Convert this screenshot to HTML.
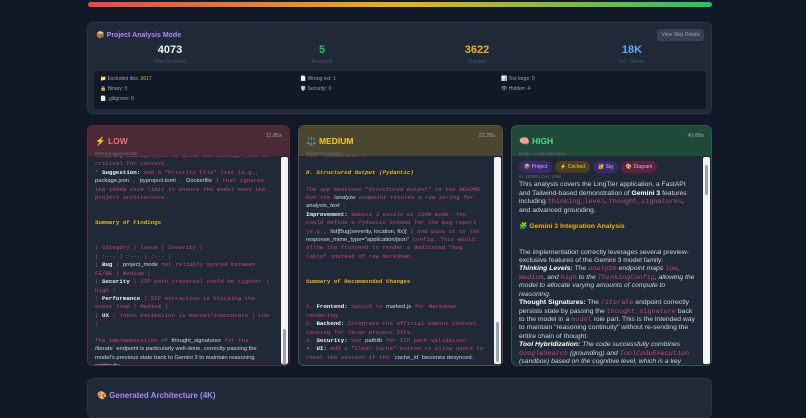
<!DOCTYPE html>
<html><head><meta charset="utf-8"><style>
*{box-sizing:border-box;margin:0;padding:0}
body{width:806px;height:407px;overflow:hidden;background:#111827;font-family:"Liberation Sans","Noto Sans CJK SC",sans-serif;color:#d1d5db;position:relative}
.bar{position:absolute;left:88px;top:2px;width:624px;height:5px;border-radius:3px;background:linear-gradient(90deg,#ef4444,#eab308 50%,#22c55e)}
.card{position:absolute;background:#1f2937;border:1px solid #2a3546;border-radius:6px}
.title{color:#a78bfa;font-weight:bold;font-size:7px}
.stat{position:absolute;text-align:center;width:120px;font-weight:bold;font-size:11px}
.stat small{display:block;font-size:5px;color:#4b5563;font-weight:normal;margin-top:3px}
.inner{position:absolute;left:6px;top:48px;width:612px;height:38px;background:#111827;border-radius:4px;font-size:5px;color:#9ca3af}
.inner span{position:absolute}
.col{position:absolute;top:125px;height:241px;border-radius:6px;background:#1f2937;overflow:hidden}
.hd{height:30px;padding:5px 7px;position:relative;z-index:2}
.hd b{font-size:8.5px}
.hd i{position:absolute;right:7px;top:7px;font-style:normal;font-size:5.5px;color:#9ca3af}
.hd em{display:block;font-style:normal;font-size:4.5px;color:#6b7280;margin-top:2px}
.body{position:absolute;top:30px;left:0;right:9px;bottom:0;padding:0 7px;font-family:"Liberation Mono",monospace;font-size:5.8px;line-height:8.4px;color:#d0407f;overflow:hidden;z-index:1}
.sb{position:absolute;right:1px;top:31px;width:7px;bottom:1px;background:#f3f4f6;border-radius:2px;z-index:3}
.sb div{position:absolute;left:2px;width:3px;background:#9ca3af;border-radius:2px}
.w{color:#f3f4f6;font-weight:bold}
.y{color:#eab308;font-weight:bold}
.s{font-family:"Liberation Sans",sans-serif;color:#d1d5db}
.p{font-family:"Liberation Sans",sans-serif;color:#d1d5db;font-size:6.8px;line-height:8.4px}
.p code{font-family:"Liberation Mono",monospace;color:#d0407f}
.tag{display:inline-block;font-family:"Liberation Sans",sans-serif;font-size:5px;padding:2px 5px;border-radius:6px;margin-right:3px}
</style></head><body>
<div class="bar"></div>
<div class="card" style="left:87px;top:22px;width:625px;height:92px">
 <div class="title" style="position:absolute;left:8px;top:8px">📦 Project Analysis Mode</div>
 <div style="position:absolute;right:7px;top:6px;background:#374151;color:#9ca3af;font-size:5px;padding:3px 4px;border-radius:3px">View Skip Details</div>
 <div class="stat" style="left:22px;top:21px;color:#f3f4f6">4073<small>Files Scanned</small></div>
 <div class="stat" style="left:174px;top:21px;color:#22c55e">5<small>Analyzed</small></div>
 <div class="stat" style="left:329px;top:21px;color:#eab308">3622<small>Skipped</small></div>
 <div class="stat" style="left:484px;top:21px;color:#60a5fa">18K<small>Est. Tokens</small></div>
 <div class="inner">
  <span style="left:6px;top:5px">📁 Excluded dirs: <b style="color:#eab308;font-weight:normal">3617</b></span>
  <span style="left:206px;top:5px">📄 Wrong ext: 1</span>
  <span style="left:407px;top:5px">📊 Too large: 0</span>
  <span style="left:6px;top:15px">🔒 Binary: 0</span>
  <span style="left:206px;top:15px">🛡️ Security: 0</span>
  <span style="left:407px;top:15px">👁 Hidden: 4</span>
  <span style="left:6px;top:25px">📄 .gitignore: 0</span>
 </div>
</div>

<div class="col" style="left:87px;width:203px;border:1px solid #5b2c3a">
 <div class="hd" style="background:#4a2b35"><b style="color:#f87171">⚡ LOW</b><i>11.85s</i><em>Fast but approximate</em></div>
 <div class="body" style="top:26px">
skipping package.json is good, but package.json is<br>critical for context.<br>* <span class="w">Suggestion:</span> Add a "Priority File" list (e.g.,<br><span class="s">package.json</span> , <span class="s">pyproject.toml</span> , <span class="s">Dockerfile</span> ) that ignores<br>the 100KB size limit to ensure the model sees the<br>project architecture.<br><br><br><span class="y">Summary of Findings</span><br><br><br>| Category | Issue | Severity |<br>| :--- | :--- | :--- |<br>| <span class="w">Bug</span> | <span class="s">project_mode</span> not reliably synced between<br>FE/BE | Medium |<br>| <span class="w">Security</span> | ZIP path traversal could be tighter |<br>High |<br>| <span class="w">Performance</span> | ZIP extraction is blocking the<br>event loop | Medium |<br>| <span class="w">UX</span> | Token estimation is manual/inaccurate | Low<br>|<br><br>The implementation of <span class="s">thought_signatures</span> for the<br><span class="s">/iterate` endpoint is particularly well-done, correctly passing the<br>model's previous state back to Gemini 3 to maintain reasoning<br>continuity.</span>
 </div>
 <div class="sb"><div style="top:172px;height:36px"></div></div>
</div>

<div class="col" style="left:298px;width:205px;border:1px solid #5a5330">
 <div class="hd" style="background:#4a4630"><b style="color:#facc15">⚖️ MEDIUM</b><i>22.28s</i><em>Balanced analysis</em></div>
 <div class="body" style="top:26px">
via `dataSelect`).<br><br><span class="y"><i>8. Structured Output (Pydantic)</i></span><br><br><i>The app mentions "Structured Output" in the README<br>but the <span class="s">/analyze</span> endpoint returns a raw string for<br><span class="s">analysis_text</span> .</i><br><span class="w">Improvement:</span> Gemini 3 excels at JSON mode. You<br>could define a Pydantic schema for the bug report<br>(e.g., <span class="s">list[Bug(severity, location, fix)]</span> ) and pass it to the<br><span class="s">response_mime_type="application/json"</span> config. This would<br>allow the frontend to render a dedicated "Bug<br>Table" instead of raw markdown.<br><br><br><span class="y">Summary of Recommended Changes</span><br><br><br>1. <span class="w">Frontend:</span> Switch to <span class="s">marked.js</span> for Markdown<br>rendering.<br>2. <span class="w">Backend:</span> Integrate the official Gemini Context<br>Caching for large project ZIPs.<br>3. <span class="w">Security:</span> Use <span class="s">pathlib</span> for ZIP path validation.<br>4. <span class="w">UI:</span> Add a "Clear Cache" button to allow users to<br>reset the session if the <span class="s">`cache_id` becomes desynced.</span>
 </div>
 <div class="sb"><div style="top:165px;height:40px"></div></div>
</div>

<div class="col" style="left:511px;width:201px;border:1px solid #2b5a47">
 <div class="hd" style="background:#1f4a3a"><b style="color:#4ade80">🧠 HIGH</b><i>40.88s</i><em>Deep + code execution</em></div>
 <div class="body" style="padding-top:5px">
  <span class="tag" style="background:#3b2a6b;color:#c4b5fd">📦 Project</span><span class="tag" style="background:#4a3f1f;color:#facc15">⚡ Cached</span><span class="tag" style="background:#3b2a6b;color:#c4b5fd">🔐 Sig</span><span class="tag" style="background:#5b2340;color:#f9a8d4">🎨 Diagram</span>
  <div style="font-family:'Liberation Sans',sans-serif;font-size:4.5px;color:#6b7280;margin-top:0px;line-height:8px">In: 18308 | Out: 1260</div>
  <div class="p">This analysis covers the LingTier application, a FastAPI and Tailwind-based demonstration of <b style="color:#fff">Gemini 3</b> features including <code>thinking_level</code>, <code>thought_signatures</code>, and advanced grounding.<br><br><b style="color:#eab308">🧩 Gemini 3 Integration Analysis</b><br><br><br>The implementation correctly leverages several preview-exclusive features of the Gemini 3 model family:<br><b style="color:#fff"><i>Thinking Levels:</i></b> <i>The <code>analyze</code> endpoint maps <code>low</code>, <code>medium</code>, and <code>high</code> to the <code>ThinkingConfig</code>, allowing the model to allocate varying amounts of compute to reasoning.</i><br><b style="color:#fff">Thought Signatures:</b> The <code>/iterate</code> endpoint correctly persists state by passing the <code>thought_signature</code> back to the model in a <code>model</code> role part. This is the intended way to maintain "reasoning continuity" without re-sending the entire chain of thought.<br><b style="color:#fff"><i>Tool Hybridization:</i></b> <i>The code successfully combines <code>GoogleSearch</code> (grounding) and <code>ToolCodeExecution</code> (sandbox) based on the cognitive level, which is a key design pattern for Gemini 3.</i></div>
 </div>
 <div class="sb"><div style="top:8px;height:30px"></div></div>
</div>

<div class="card" style="left:87px;top:378px;width:625px;height:40px">
 <div class="title" style="position:absolute;left:9px;top:12px;font-size:8px">🎨 Generated Architecture (4K)</div>
</div>
</body></html>
